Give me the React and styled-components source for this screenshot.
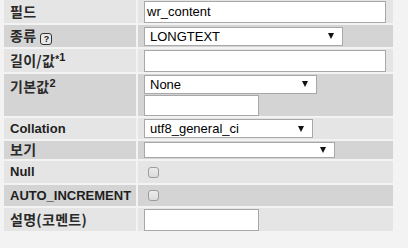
import React from 'react'
import styled, { createGlobalStyle } from 'styled-components'

const GlobalStyle = createGlobalStyle`
  body {
    margin: 0;
    background: #f3f3f3;
    font-family: "Liberation Sans", Arial, "Noto Sans CJK KR", sans-serif;
  }
`

const Table = styled.div`
  display: grid;
  grid-template-columns: 132px 255px;
  column-gap: 2px;
  row-gap: 2px;
  margin-left: 4px;
  width: 389px;
`

const Label = styled.div`
  height: ${({ h }) => h}px;
  background: ${({ dark }) => (dark ? '#d4d4d4' : '#e5e5e5')};
  display: flex;
  align-items: ${({ top }) => (top ? 'flex-start' : 'center')};
  padding: ${({ top }) => (top ? '4px 0 0 6px' : '0 0 0 6px')};
  box-sizing: border-box;
  font-size: 13px;
  font-weight: bold;
  color: #1e1e1e;
  white-space: nowrap;
`

const Text = styled.span`
  line-height: 16px;
  & sup {
    font-size: 11px;
    line-height: 0;
    vertical-align: 5px;
  }
`

const Ko = styled.span`
  font-size: 14px;
  font-weight: bold;
  font-family: "Noto Sans CJK KR", sans-serif;
  letter-spacing: 0.3px;
  color: #2a2a2a;
`

const Value = styled.div`
  height: ${({ h }) => h}px;
  background: ${({ dark }) => (dark ? '#d4d4d4' : '#e5e5e5')};
  display: flex;
  flex-direction: column;
  justify-content: ${({ top }) => (top ? 'flex-start' : 'center')};
  align-items: flex-start;
  gap: 1px;
  padding: ${({ top }) => (top ? '1px 0 0 6px' : '0 0 0 6px')};
  box-sizing: border-box;
`

const TextInput = styled.div`
  width: ${({ w }) => w}px;
  height: 22px;
  box-sizing: border-box;
  background: #fff;
  border: 1px solid #a8a8a8;
  font-size: 13px;
  color: #000;
  padding-left: 2px;
  display: flex;
  align-items: center;
`

const Select = styled.div`
  width: ${({ w }) => w}px;
  height: ${({ h }) => h || 19}px;
  box-sizing: border-box;
  background: #fff;
  border: 1px solid #a8a8a8;
  font-size: 13px;
  color: #000;
  padding: 0 8px 0 5px;
  display: flex;
  align-items: center;
  justify-content: space-between;
`

const Arrow = styled.span`
  width: 0;
  height: 0;
  border-left: 3px solid transparent;
  border-right: 3px solid transparent;
  border-top: 6px solid #111;
  margin-left: auto;
`

const Check = styled.span`
  width: 11px;
  height: 11px;
  margin-left: 4px;
  box-sizing: border-box;
  border: 1px solid #9c9c9c;
  border-radius: 3px;
  background: linear-gradient(#ececec, #dcdcdc);
`

const Help = styled.span`
  display: inline-flex;
  align-items: center;
  justify-content: center;
  width: 12px;
  height: 12px;
  margin-left: 4px;
  vertical-align: -1px;
  box-sizing: border-box;
  border: 1px solid #333;
  border-radius: 3px;
  font-size: 9px;
  font-weight: bold;
  line-height: 1;
  color: #222;
  background: #e8e8e8;
`

const Star = styled.span`
  font-size: 10px;
  vertical-align: 3px;
`

function SelectBox({ w, h, text }) {
  return (
    <Select w={w} h={h}>
      <span>{text}</span>
      <Arrow />
    </Select>
  )
}

export default function App() {
  return (
    <>
      <GlobalStyle />
      <Table>
        <Label h={23}><Text><Ko>필드</Ko></Text></Label>
        <Value h={23}><TextInput w={242}>wr_content</TextInput></Value>

        <Label h={22} dark><Text><Ko>종류</Ko><Help>?</Help></Text></Label>
        <Value h={22} dark><SelectBox w={199} text="LONGTEXT" /></Value>

        <Label h={23}><Text><Ko>길이/값</Ko><Star>*</Star><sup>1</sup></Text></Label>
        <Value h={23}><TextInput w={242} /></Value>

        <Label h={42} dark top><Text><Ko>기본값</Ko><sup>2</sup></Text></Label>
        <Value h={42} dark top>
          <SelectBox w={173} text="None" />
          <TextInput w={115} />
        </Value>

        <Label h={21}><Text>Collation</Text></Label>
        <Value h={21}><SelectBox w={169} text="utf8_general_ci" /></Value>

        <Label h={18} dark><Text><Ko>보기</Ko></Text></Label>
        <Value h={18} dark><SelectBox w={191} h={16} text="" /></Value>

        <Label h={22}><Text>Null</Text></Label>
        <Value h={22}><Check /></Value>

        <Label h={21} dark><Text>AUTO_INCREMENT</Text></Label>
        <Value h={21} dark><Check /></Value>

        <Label h={23}><Text><Ko>설명(코멘트)</Ko></Text></Label>
        <Value h={23}><TextInput w={115} /></Value>
      </Table>
    </>
  )
}
